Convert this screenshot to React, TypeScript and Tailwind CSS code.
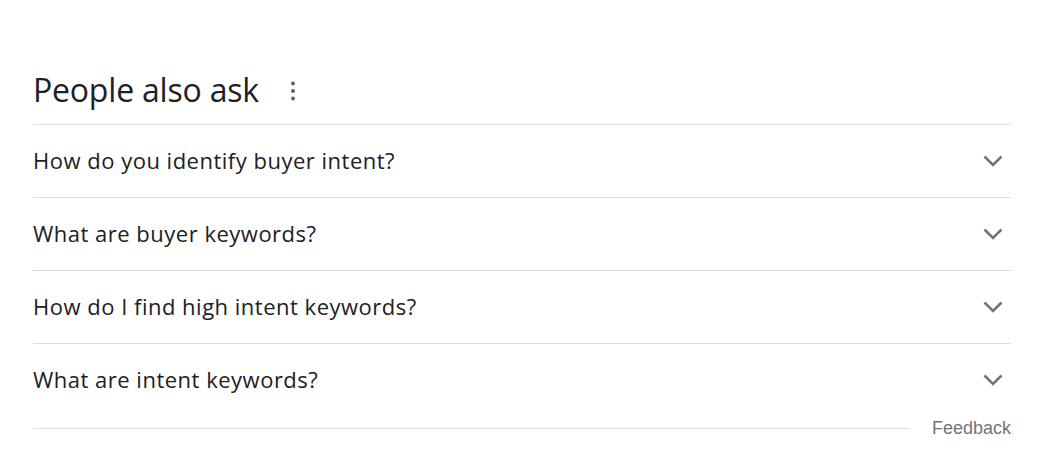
const questions = [
  "How do you identify buyer intent?",
  "What are buyer keywords?",
  "How do I find high intent keywords?",
  "What are intent keywords?",
];

export default function App() {
  return (
    <div className="min-h-[469px] w-[1056px] bg-white pl-[33px] pr-[45px] pt-[70px]" style={{ fontFamily: "'Open Sans', Roboto, sans-serif" }}>
      <div className="flex h-[54px] items-start">
        <h2 className="text-[32px] leading-[40px] tracking-[-0.2px] text-[#202124]">People also ask</h2>
        <button className="ml-[22px] mt-[9px] flex h-[24px] w-[24px] items-center justify-center">
          <svg width="24" height="24" viewBox="0 0 24 24" fill="#5f6368">
            <circle cx="12" cy="4.5" r="2" />
            <circle cx="12" cy="12" r="2" />
            <circle cx="12" cy="19.5" r="2" />
          </svg>
        </button>
      </div>
      <div className="border-t border-[#dadce0]">
        {questions.map((q, i) => (
          <div
            key={q}
            className={
              i < questions.length - 1
                ? "flex h-[73px] items-center justify-between border-b border-[#dadce0]"
                : "flex h-[72px] items-center justify-between"
            }
          >
            <span className="pb-[2px] text-[22px] tracking-[0.5px] text-[#202124]">{q}</span>
            <svg className="mr-[8px]" width="20" height="12" viewBox="0 0 20 12" fill="none" stroke="#70757a" strokeWidth="2.6">
              <polyline points="1.5,1.5 10,10 18.5,1.5" />
            </svg>
          </div>
        ))}
      </div>
      <div className="flex h-[24px] items-center">
        <div className="h-px flex-1 bg-[#dadce0]" />
        <span className="ml-[22px] text-[18px] leading-[24px] text-[#70757a]" style={{ fontFamily: "'Liberation Sans', Arial, sans-serif" }}>
          Feedback
        </span>
      </div>
    </div>
  );
}
